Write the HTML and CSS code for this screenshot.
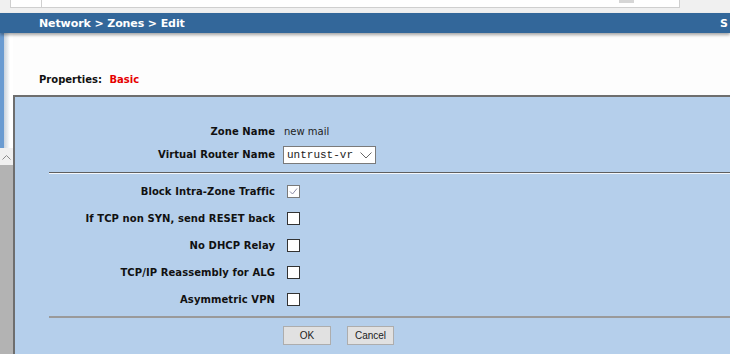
FILE: index.html
```html
<!DOCTYPE html>
<html lang="en">
<head>
    <meta charset="UTF-8">
    <meta name="viewport" content="width=device-width, initial-scale=1.0">
    <title>Network &gt; Zones &gt; Edit</title>
    <link rel="stylesheet" href="styles.css">
</head>
<body>

    <div class="topbar">
        <div class="tabs"><span class="tab-sep"></span><span class="tab-btn"></span></div>
    </div>

    <div class="header">
        <span class="crumbs">Network &gt; Zones &gt; Edit</span>
        <span class="help">S</span>
    </div>

    <div class="page">
        <div class="sidebar">
            <div class="nav-strip"></div>
            <div class="scroll-up">
                <svg width="9" height="6" viewBox="0 0 9 6"><polyline points="0.5,5.5 4.5,1.5 8.5,5.5" fill="none" stroke="#8a8a8a" stroke-width="1"/></svg>
            </div>
            <div class="scroll-track"></div>
        </div>

        <div class="main">
            <div class="props">Properties: <span class="props-tab">Basic</span></div>

            <div class="panel">
                <form class="zone-form">
                    <div class="row">
                        <label>Zone Name</label>
                        <span class="value">new mail</span>
                    </div>
                    <div class="row">
                        <label>Virtual Router Name</label>
                        <div class="select">
                            <span>untrust-vr</span>
                            <svg width="12" height="7" viewBox="0 0 12 7"><polyline points="0.5,0.5 6,6 11.5,0.5" fill="none" stroke="#666" stroke-width="1"/></svg>
                        </div>
                    </div>

                    <div class="rule"></div>

                    <div class="row check-row">
                        <label>Block Intra-Zone Traffic</label>
                        <span class="check checked">
                            <svg width="11" height="11" viewBox="0 0 11 11"><polyline points="2,5.5 4.5,8 9,2.5" fill="none" stroke="#8c8ca8" stroke-width="1"/></svg>
                        </span>
                    </div>
                    <div class="row check-row">
                        <label>If TCP non SYN, send RESET back</label>
                        <span class="check"></span>
                    </div>
                    <div class="row check-row">
                        <label>No DHCP Relay</label>
                        <span class="check"></span>
                    </div>
                    <div class="row check-row">
                        <label>TCP/IP Reassembly for ALG</label>
                        <span class="check"></span>
                    </div>
                    <div class="row check-row">
                        <label>Asymmetric VPN</label>
                        <span class="check"></span>
                    </div>

                    <div class="rule rule-bottom"></div>

                    <div class="row buttons">
                        <span></span>
                        <div class="btn-group">
                            <button type="button" class="btn btn-ok">OK</button>
                            <button type="button" class="btn">Cancel</button>
                        </div>
                    </div>
                </form>
            </div>
        </div>
    </div>

</body>
</html>
```

FILE: styles.css
```css
html, body { margin: 0; height: 100%; overflow: hidden; }
body { font-family: "DejaVu Sans", Verdana, sans-serif; font-size: 10px; color: #111; background-color: #fdfdfd; }

/* browser tab strip, cut off at the top */
.topbar { height: 13px; background-color: #f0f0f0; position: relative; }
.tabs { margin-left: 10px; width: 668px; height: 7px; background-color: #fff; border: 1px solid #cfcfcf; border-top: 0; position: relative; }
.tab-sep { position: absolute; left: 30px; top: 0; width: 1px; height: 7px; background-color: #d0d0d0; }
.tab-btn { position: absolute; left: 608px; top: 0; width: 15px; height: 3px; background-color: #d6d6d6; }

.header { height: 20px; background-color: #33679a; color: #fff; font-weight: bold; font-size: 11px; display: flex; align-items: center; padding-left: 39px; padding-right: 2px; box-shadow: 0 2px 3px rgba(0, 0, 0, 0.35); position: relative; z-index: 1; white-space: nowrap; }
.crumbs { letter-spacing: -0.1px; }
.help { margin-left: auto; }

.page { display: flex; height: calc(100% - 33px); }

.sidebar { width: 13px; display: flex; flex-direction: column; }
.nav-strip { height: 115px; background: linear-gradient(to right, #6a9bd1 0, #6a9bd1 4px, #c9d3de 4px, #e4e8ec 7px, #fff 10px); }
.scroll-up { height: 17px; background-color: #f0f0f0; display: flex; justify-content: center; align-items: center; }
.scroll-track { flex: 1; background-color: #b3b3b3; }

.main { flex: 1; display: flex; flex-direction: column; }
.props { font-weight: bold; margin: 41px 0 9px 26px; line-height: 12px; }
.props-tab { color: #e60000; margin-left: 4px; }

.panel { flex: 1; background-color: #b5cfeb; border-left: 2px solid #6e6e6e; border-top: 2px solid #6e6e6e; }

.zone-form { padding: 23px 0 0 34px; }
.row { display: grid; grid-template-columns: 226px 1fr; column-gap: 8px; align-items: center; height: 23px; }
.row label { text-align: right; font-weight: bold; white-space: nowrap; letter-spacing: 0.08px; }
.value { font-weight: normal; color: #222; margin-left: 1px; }

.select { height: 16px; width: 85px; padding: 0 3px; border: 1px solid #7a7a7a; background-color: #fff; display: flex; align-items: center; justify-content: space-between; font-family: "Liberation Mono", monospace; font-size: 11px; color: #222; }
.select svg { margin-top: 1px; }

.rule { border-top: 1px solid #5f5f5f; border-bottom: 1px solid #f4f8fc; margin-top: 6px; }
.check-row { height: 27px; }
.rule + .check-row { margin-top: 4px; }
.check { width: 11px; height: 11px; border: 1px solid #333; background-color: #fff; margin-left: 4px; display: flex; }
.check.checked { border-color: #7a7a7a; }

.rule-bottom { border-top: 2px solid #9a9a9a; border-bottom: 0; margin-top: 3px; }

.buttons { height: auto; margin-top: 8px; }
.btn-group { display: flex; gap: 16px; }
.btn { font-family: "Liberation Sans", Arial, sans-serif; font-size: 10px; color: #222; background-color: #e1e1e1; border: 1px solid #adadad; height: 19px; width: 47px; padding: 0; }
.btn-ok { width: 48px; }
```
